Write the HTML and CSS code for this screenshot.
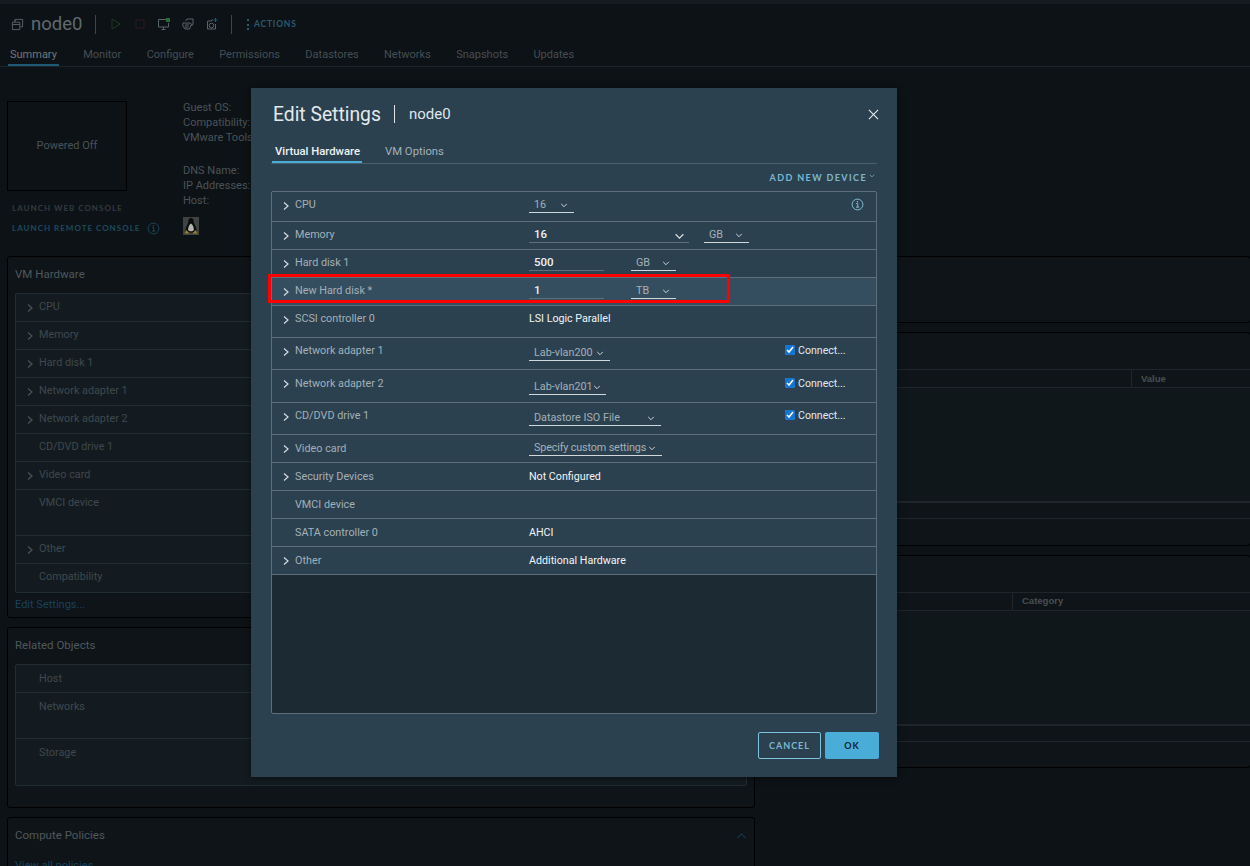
FILE: index.html
```html
<!DOCTYPE html>
<html lang="en">
<head>
<meta charset="utf-8">
<title>Edit Settings</title>
<link rel="stylesheet" href="styles.css">
</head>
<body>
<svg class="sprite" aria-hidden="true">
  <symbol id="chev" viewBox="0 0 8 10"><path d="M2 1.500 6 5 2 8.500" fill="none" stroke="currentColor" stroke-width="1.200"/></symbol>
  <symbol id="down" viewBox="0 0 10 6"><path d="M1.500 1 5 4.500 8.500 1" fill="none" stroke="currentColor" stroke-width="1.200"/></symbol>
  <symbol id="info" viewBox="0 0 14 14"><circle cx="7" cy="7" r="5.800" fill="none" stroke="currentColor" stroke-width="1"/><path d="M5.600 6h1.700v3.600M5.400 9.800h3.400" fill="none" stroke="currentColor" stroke-width="1"/><circle cx="7" cy="4" r=".8" fill="currentColor"/></symbol>
</svg>
<div class="page">
  <div class="strip"></div>
  <header class="head">
    <div class="titlebar">
      <svg class="vm-icon" viewBox="0 0 14 14"><path d="M4.500 4V1.500h8v8H10M1.500 4.500h8v8h-8zM1.500 7h8M4 4V2" fill="none" stroke="#59646a" stroke-width="1"/></svg>
      <h1 class="vm-name">node0</h1>
      <span class="vsep"></span>
      <div class="tools">
        <svg class="tool" viewBox="0 0 12 12"><path d="M2 1v10l8-5z" fill="none" stroke="#1d3b22" stroke-width="1"/></svg>
        <svg class="tool" viewBox="0 0 12 12"><rect x="2" y="2" width="8" height="8" fill="none" stroke="#2e181b" stroke-width="1"/></svg>
        <svg class="tool" viewBox="0 0 12 12"><path d="M8 1.500H.5v7.500h10V5M3.500 11.500h4M5.500 9v2.500" fill="none" stroke="#59646a"/><rect x="8" y="0" width="4" height="4" fill="#2a6b33"/></svg>
        <svg class="tool" viewBox="0 0 12 12"><path d="M3.500 3 5 1h6v5L9.500 8M1 5h7l1.500 1-2 5H3L.8 8zM3 7h4M2.500 9h4" fill="none" stroke="#59646a"/></svg>
        <svg class="tool" viewBox="0 0 12 12"><path d="M2 3h3l1-1h1M1.500 3v8h8V6" fill="none" stroke="#59646a"/><circle cx="5.500" cy="7.500" r="2.300" fill="none" stroke="#59646a"/><path d="M9.500 0v4M7.500 2h4" stroke="#1d5a80"/></svg>
      </div>
      <span class="vsep vsep-2"></span>
      <span class="dots"></span>
      <span class="actions">ACTIONS</span>
    </div>
    <nav class="tabs">
      <a class="tab tab-on">Summary</a><a class="tab">Monitor</a><a class="tab">Configure</a><a class="tab">Permissions</a><a class="tab">Datastores</a><a class="tab">Networks</a><a class="tab">Snapshots</a><a class="tab">Updates</a>
    </nav>
  </header>

  <section class="summary">
    <div class="console">
      <div class="screen">Powered Off</div>
      <div class="link-off">LAUNCH WEB CONSOLE</div>
      <div class="link-on">LAUNCH REMOTE CONSOLE <svg class="i-info"><use href="#info"/></svg></div>
    </div>
    <div class="facts">
      <div>Guest OS:</div><div>Compatibility:</div><div>VMware Tools:</div>
      <div class="fact-gap">DNS Name:</div><div>IP Addresses:</div><div>Host:</div>
      <svg class="tux" viewBox="0 0 16 18"><rect width="16" height="18" fill="#3e4240"/><path d="M8 1C5.800 1 5.300 3 5.300 5 5 7.500 2.500 9.500 2.500 13c0 1.500 1.500 2.500 5.500 2.500s5.500-1 5.500-2.500c0-3.500-2.500-5.500-2.800-8C10.700 3 10.200 1 8 1z" fill="#0a0c0d"/><path d="M8 6.500c-1.600 1-2.900 3.500-2.900 6 0 1.200 1.300 1.800 2.900 1.800s2.900-.6 2.900-1.800c0-2.500-1.300-5-2.900-6z" fill="#b5b5ae"/><path d="M3.500 13 6.500 16.500H1.500zM12.500 13 9.500 16.500H14.500z" fill="#9a7f2c"/></svg>
    </div>
  </section>

  <section class="board">
    <div class="col">
      <article class="card card-hw">
        <h2 class="card-title">VM Hardware</h2>
        <div class="dim-table">
          <div class="dim-row"><svg class="dim-chev"><use href="#chev"/></svg><span>CPU</span></div>
          <div class="dim-row"><svg class="dim-chev"><use href="#chev"/></svg><span>Memory</span></div>
          <div class="dim-row"><svg class="dim-chev"><use href="#chev"/></svg><span>Hard disk 1</span></div>
          <div class="dim-row"><svg class="dim-chev"><use href="#chev"/></svg><span>Network adapter 1</span></div>
          <div class="dim-row"><svg class="dim-chev"><use href="#chev"/></svg><span>Network adapter 2</span></div>
          <div class="dim-row"><i class="dim-blank"></i><span>CD/DVD drive 1</span></div>
          <div class="dim-row"><svg class="dim-chev"><use href="#chev"/></svg><span>Video card</span></div>
          <div class="dim-row dim-tall"><i class="dim-blank"></i><span>VMCI device</span></div>
          <div class="dim-row"><svg class="dim-chev"><use href="#chev"/></svg><span>Other</span></div>
          <div class="dim-row dim-last"><i class="dim-blank"></i><span>Compatibility</span></div>
        </div>
        <a class="dim-link">Edit Settings...</a>
      </article>
      <article class="card card-rel">
        <h2 class="card-title">Related Objects</h2>
        <div class="dim-table dim-table-rel">
          <div class="dim-row"><i class="dim-blank"></i><span>Host</span></div>
          <div class="dim-row dim-tall"><i class="dim-blank"></i><span>Networks</span></div>
          <div class="dim-row dim-tall dim-last"><i class="dim-blank"></i><span>Storage</span></div>
        </div>
      </article>
      <article class="card card-policy">
        <div class="policy-head">
          <h2 class="card-title">Compute Policies</h2>
          <svg class="up" viewBox="0 0 12 7"><path d="M1 6 6 1l5 5" fill="none" stroke="#123a52" stroke-width="1.200"/></svg>
        </div>
        <a class="dim-link policy-link">View all policies</a>
      </article>
    </div>
    <div class="col">
      <article class="card card-r1"></article>
      <article class="card card-r2">
        <div class="grid grid-value">
          <div class="grid-head"><span></span><span class="grid-col">Value</span></div>
          <div class="grid-body"></div>
          <div class="grid-foot"></div>
        </div>
      </article>
      <article class="card card-r3">
        <div class="grid grid-cat">
          <div class="grid-head"><span></span><span class="grid-col">Category</span></div>
          <div class="grid-body"></div>
          <div class="grid-foot"></div>
        </div>
      </article>
    </div>
  </section>

  <div class="modal">
    <div class="modal-head">
      <h2 class="modal-title">Edit Settings</h2>
      <span class="modal-sep"></span>
      <span class="modal-sub">node0</span>
      <svg class="close" viewBox="0 0 12 12"><path d="M1 1l10 10M11 1 1 11" stroke="#eef2f4" stroke-width="1.100"/></svg>
    </div>
    <div class="modal-tabs">
      <a class="mtab mtab-on">Virtual Hardware</a>
      <a class="mtab">VM Options</a>
    </div>
    <div class="add-row"><span class="add">ADD NEW DEVICE</span><svg class="add-chev"><use href="#down"/></svg></div>

    <div class="hw">
      <div class="row r30"><svg class="chev"><use href="#chev"/></svg><span class="name">CPU</span>
        <div class="val"><span class="sel w45">16<svg class="dn"><use href="#down"/></svg></span></div>
        <div class="tail tail-info"><svg class="i-info i-info-m"><use href="#info"/></svg></div></div>
      <div class="row r28"><svg class="chev"><use href="#chev"/></svg><span class="name">Memory</span>
        <div class="val"><span class="sel inp w160"><b>16</b><svg class="dn dn-big"><use href="#down"/></svg></span><span class="sel w45 gap15">GB<svg class="dn"><use href="#down"/></svg></span></div></div>
      <div class="row r28"><svg class="chev"><use href="#chev"/></svg><span class="name">Hard disk 1</span>
        <div class="val"><span class="sel inp w75"><b>500</b></span><span class="sel w45 gap27">GB<svg class="dn"><use href="#down"/></svg></span></div></div>
      <div class="row r28 row-new"><svg class="chev"><use href="#chev"/></svg><span class="name">New Hard disk *</span>
        <div class="val"><span class="sel inp w75"><b>1</b></span><span class="sel w45 gap27">TB<svg class="dn"><use href="#down"/></svg></span></div></div>
      <div class="row r32"><svg class="chev"><use href="#chev"/></svg><span class="name">SCSI controller 0</span>
        <div class="val"><span class="plain">LSI Logic Parallel</span></div></div>
      <div class="row r32"><svg class="chev"><use href="#chev"/></svg><span class="name">Network adapter 1</span>
        <div class="val"><span class="sel low2 w81">Lab-vlan200<svg class="dn"><use href="#down"/></svg></span></div>
        <label class="tail conn"><input type="checkbox" checked>Connect...</label></div>
      <div class="row r33"><svg class="chev"><use href="#chev"/></svg><span class="name name-low">Network adapter 2</span>
        <div class="val"><span class="sel low3 w77">Lab-vlan201<svg class="dn"><use href="#down"/></svg></span></div>
        <label class="tail conn conn-low"><input type="checkbox" checked>Connect...</label></div>
      <div class="row r32"><svg class="chev"><use href="#chev"/></svg><span class="name">CD/DVD drive 1</span>
        <div class="val"><span class="sel low2 w132">Datastore ISO File<svg class="dn"><use href="#down"/></svg></span></div>
        <label class="tail conn"><input type="checkbox" checked>Connect...</label></div>
      <div class="row r28 lower"><svg class="chev"><use href="#chev"/></svg><span class="name">Video card</span>
        <div class="val"><span class="sel w133 tight">Specify custom settings<svg class="dn"><use href="#down"/></svg></span></div></div>
      <div class="row r28 lower"><svg class="chev"><use href="#chev"/></svg><span class="name">Security Devices</span>
        <div class="val"><span class="plain">Not Configured</span></div></div>
      <div class="row r28 lower"><i class="chev"></i><span class="name">VMCI device</span><div class="val"></div></div>
      <div class="row r28 lower"><i class="chev"></i><span class="name">SATA controller 0</span>
        <div class="val"><span class="plain">AHCI</span></div></div>
      <div class="row r28 lower"><svg class="chev"><use href="#chev"/></svg><span class="name">Other</span>
        <div class="val"><span class="plain">Additional Hardware</span></div></div>
    </div>

    <div class="modal-foot">
      <button class="btn btn-line">CANCEL</button>
      <button class="btn btn-fill">OK</button>
    </div>
    <div class="mark"></div>
  </div>
</div>
</body>
</html>
```

FILE: styles.css
```css
* { box-sizing: border-box; }
html, body { margin: 0; padding: 0; background: #0d1216; }
body { font-family: "Roboto", "Liberation Sans", sans-serif; font-size: 11px; color: #4f585d; white-space: nowrap; }
.sprite { position: absolute; width: 0; height: 0; }
h1, h2 { margin: 0; font-weight: 400; }
svg { display: block; flex: none; }

.page { position: relative; width: 1250px; height: 866px; overflow: hidden; background: #0d1216; }
.strip { height: 4px; background: #141a20; }

/* header */
.titlebar { display: flex; align-items: center; height: 40px; padding-left: 11px; }
.vm-icon { width: 13px; height: 13px; margin-right: 7px; }
.vm-name { font-size: 18.500px; line-height: 24px; color: #5f6a70; width: 51px; }
.vsep { width: 1px; height: 19px; background: #3c464c; margin-left: 13px; }
.tools { display: flex; gap: 12px; margin-left: 14px; }
.tool { width: 12px; height: 12px; }
.vsep-2 { margin-left: 13px; }
.dots { width: 2px; height: 11px; margin-left: 15px; background: repeating-linear-gradient(#2a5b70 0 2px, transparent 2px 4.500px); }
.actions { margin-left: 5px; font-family: "Lato", sans-serif; font-size: 8.500px; font-weight: 700; letter-spacing: .8px; color: #2a5b70; }

.tabs { display: flex; height: 23px; gap: 25.300px; padding-left: 10px; border-bottom: 1px solid #1c252b; }
.tab { font-size: 11px; line-height: 22px; color: #454e53; height: 22px; }
.tab-on { color: #6e787d; position: relative; margin-right: 1px; }
.tab-on::after { content: ""; position: absolute; left: -2px; right: -2px; bottom: 0; height: 2px; background: #1f5a75; }

/* summary */
.summary { display: flex; height: 189px; padding: 34px 0 0 7px; }
.console { width: 176px; }
.screen { width: 120px; height: 90px; border: 1px solid #000; padding-bottom: 1px; display: flex; align-items: center; justify-content: center; color: #4a5358; }
.link-off, .link-on { font-family: "Lato", sans-serif; font-size: 8px; font-weight: 700; letter-spacing: 1px; padding-left: 5px; display: flex; align-items: center; }
.link-off { color: #333b3f; margin-top: 11px; height: 12px; }
.link-on { color: #1f4a5e; margin-top: 7px; height: 14px; gap: 7px; }
.i-info { width: 13px; height: 13px; color: #1f4a5e; }
.facts { line-height: 15px; margin-top: -1px; color: #4a5358; }
.fact-gap { margin-top: 18px; }
.tux { width: 16px; height: 18px; margin-top: 9px; }

/* board */
.board { display: grid; grid-template-columns: 748px 486px; gap: 10px; padding-left: 7px; }
.col { display: flex; flex-direction: column; gap: 9px; }
.card { border: 1px solid #000; border-radius: 3px; padding: 0 7px; background: #0e1418; }
.card-hw { height: 362px; }
.card-rel { height: 181px; }
.card-policy { height: 80px; }
.card-r1 { height: 67px; }
.card-r2 { height: 214px; }
.card-r3 { height: 213px; }
.card-title { font-size: 11.500px; line-height: 34px; height: 36px; color: #4f585d; }

.dim-table { border: 1px solid #222c33; border-radius: 2px; background: #131b20; }
.dim-table-rel .dim-row { padding-top: 6px; }
.dim-row { display: flex; height: 28px; border-bottom: 1px solid #222c33; align-items: flex-start; padding-top: 5px; line-height: 16px; font-size: 10.800px; color: #3f484d; }
.dim-last { border-bottom: 0; }
.dim-tall { height: 46px; }
.dim-chev { width: 8px; height: 10px; margin: 4px 5px 0 10px; color: #4a5358; }
.dim-blank { width: 23px; flex: none; }
.dim-link { display: block; line-height: 24px; color: #1a4258; }
.policy-head { display: flex; justify-content: space-between; align-items: center; }
.up { width: 11px; height: 6px; margin-right: 0; }
.policy-link { line-height: 16px; margin-top: 4px; }

.grid { margin-top: 36px; margin-right: -10px; }
.grid-head { display: grid; height: 19px; border-top: 1px solid #1e262b; border-bottom: 1px solid #1e262b; font-size: 9.500px; color: #494f52; line-height: 17px; font-weight: 700; font-family: "Liberation Sans", sans-serif; }
.grid-value .grid-head { grid-template-columns: 358px 1fr; }
.grid-cat .grid-head { grid-template-columns: 239px 1fr; line-height: 16px; }
.grid-col { border-left: 1px solid #1e262b; padding-left: 9px; }
.grid-body { height: 115px; background: #10171b; border-bottom: 2px solid #1e262b; }
.grid-foot { height: 16px; border-bottom: 1px solid #1e262b; }

/* modal */
.modal { position: absolute; left: 251px; top: 88px; width: 646px; height: 689px; padding: 0 20px; background: #2b4150; box-shadow: 0 1px 6px rgba(0,0,0,.5); }
.modal-head { display: flex; align-items: center; height: 52px; padding-left: 2px; }
.modal-title { font-size: 19.300px; font-weight: 400; color: #e4e9ec; width: 108px; margin-right: 13px; }
.modal-sep { width: 1px; height: 18px; background: #dfe5e8; margin-right: 14px; }
.modal-sub { font-size: 15px; color: #dfe5e8; }
.close { width: 11px; height: 11px; margin-left: auto; margin-right: -2px; }
.modal-tabs { display: flex; gap: 20px; height: 24px; padding-left: 1px; border-bottom: 1px solid #49606e; }
.mtab { font-size: 11.300px; line-height: 24px; height: 23px; color: #a4b0b7; padding: 0 3px; }
.mtab-on { color: #eef2f4; border-bottom: 2px solid #49add8; font-weight: 500; width: 90px; }
.add-row { display: flex; justify-content: flex-end; align-items: center; height: 27px; padding-bottom: 1px; color: #7cb8cf; }
.add { font-family: "Lato", sans-serif; font-size: 9px; font-weight: 700; letter-spacing: 1.400px; }
.add-chev { width: 6px; height: 4px; margin: 0 2px 3px 2px; }

.hw { height: 523px; border: 1px solid #5e6f7b; border-radius: 2px; background: #1c2a33; }
.row { display: grid; grid-template-columns: 23px 234px 256px 1fr; align-items: start; padding-top: 5px; line-height: 16px; background: #2b4150; border-bottom: 1px solid #5e6f7b; }
.r30 { height: 30px; }
.r28 { height: 28px; }
.r32 { height: 32px; }
.r33 { height: 33px; }
.lower { padding-top: 6px; }
.row-new { background: #344e60; }
.chev { width: 8px; height: 10px; margin: 4px 0 0 10px; color: #d5dce0; }
.lower .chev { margin-top: 3px; }
.name { color: #a4b0b7; font-size: 10.800px; }
.name-low { margin-top: 1px; }
.val { display: flex; margin-top: -1px; }
.lower .val { margin-top: -2px; }
.plain { color: #f2f5f6; font-size: 10.700px; margin-top: 1px; }
.lower .plain { margin-top: 2px; }
.sel { display: flex; align-items: flex-start; justify-content: space-between; height: 17px; padding: 1px 6px 0 5px; border-bottom: 1px solid #d0d8dc; color: #a4b0b7; font-size: 10.800px; }
.sel b { font-weight: 500; font-size: 11.500px; color: #eef2f4; margin-top: -1px; }
.inp { border-bottom-color: #5e6f7b; }
.dn { width: 8px; height: 5px; margin-top: 6px; color: #d5dce0; }
.dn-big { width: 11px; height: 7px; margin-right: -2px; }
.w45 { width: 45px; }
.w75 { width: 75px; }
.w77 { width: 77px; }
.w81 { width: 81px; }
.w132 { width: 132px; }
.w133 { width: 133px; }
.w160 { width: 160px; }
.gap15 { margin-left: 15px; }
.gap27 { margin-left: 27px; }
.low2 { margin-top: 2px; }
.low3 { margin-top: 4px; }
.tight { letter-spacing: -.15px; }
.tail-info { display: flex; justify-content: flex-end; padding-right: 12px; }
.i-info-m { color: #8fc6dc; width: 13px; height: 13px; margin-top: 1px; }
.conn { display: flex; align-items: flex-start; color: #e3e9ec; line-height: 18px; font-size: 10.600px; margin-top: -1px; }
.conn-low { margin-top: 0; }
.conn input { width: 10px; height: 10px; margin: 3px 3px 0 0; accent-color: #1375d1; }

.modal-foot { display: flex; justify-content: flex-end; gap: 4px; margin-top: 18px; margin-right: -2px; }
.btn { height: 27px; border-radius: 2px; font-family: "Lato", sans-serif; font-size: 9px; font-weight: 700; letter-spacing: 1px; padding: 0; }
.btn-line { width: 63px; border: 1px solid #7cc4dd; background: transparent; color: #7cb8cf; }
.btn-fill { width: 54px; border: 0; background: #49add8; color: #12232e; }

.mark { position: absolute; left: 17px; top: 186px; width: 462px; height: 29px; border: 3px solid #f00; }
```
